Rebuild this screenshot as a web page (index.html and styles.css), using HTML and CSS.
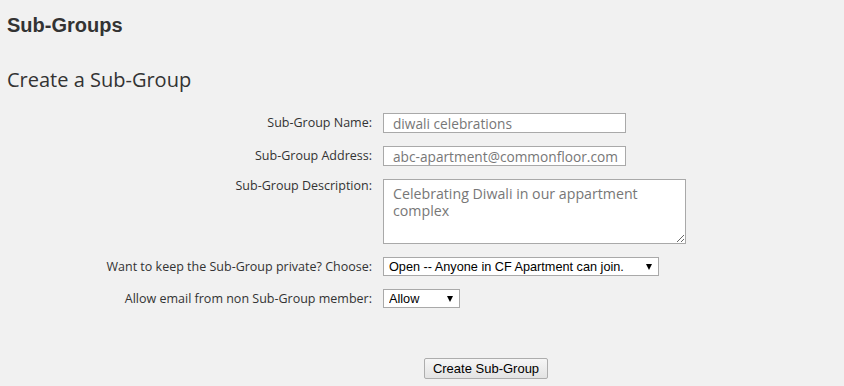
FILE: index.html
```html
<!DOCTYPE html>
<html>
<head>
<meta charset="utf-8">
<title>Sub-Groups</title>
<link rel="stylesheet" href="styles.css">
</head>
<body>
<h2 class="page-title">Sub-Groups</h2>
<h3 class="section-title">Create a Sub-Group</h3>
<form class="form-grid">
  <label class="field-label" for="sg-name">Sub-Group Name:</label>
  <input class="text-input" id="sg-name" type="text" value="diwali celebrations">

  <label class="field-label" for="sg-addr">Sub-Group Address:</label>
  <input class="text-input" id="sg-addr" type="text" value="abc-apartment@commonfloor.com">

  <label class="field-label field-label-top" for="sg-desc">Sub-Group Description:</label>
  <textarea class="text-area" id="sg-desc">Celebrating Diwali in our appartment complex</textarea>

  <label class="field-label" for="sg-priv">Want to keep the Sub-Group private? Choose:</label>
  <span class="select-wrap select-wide">
    <select class="select-box" id="sg-priv">
      <option>Open -- Anyone in CF Apartment can join.</option>
      <option>Closed -- Only approved members can join.</option>
    </select>
  </span>

  <label class="field-label" for="sg-mail">Allow email from non Sub-Group member:</label>
  <span class="select-wrap select-narrow">
    <select class="select-box" id="sg-mail">
      <option>Allow</option>
      <option>Deny</option>
    </select>
  </span>

  <span class="spacer"></span>
  <div class="actions">
    <button class="submit-btn" type="button">Create Sub-Group</button>
  </div>
</form>
</body>
</html>
```

FILE: styles.css
```css
html, body {
  background: #f1f1f1;
}
body {
  margin: 0;
  padding: 0 7px;
  color: #333;
  font-family: "Open Sans", "DejaVu Sans", sans-serif;
}
.page-title {
  margin: 14px 0 0;
  font-family: "Liberation Sans", Arial, sans-serif;
  font-size: 20px;
  font-weight: bold;
  line-height: 23px;
  color: #333;
}
.section-title {
  margin: 29px 0 0;
  font-family: "Open Sans", sans-serif;
  font-size: 20px;
  font-weight: normal;
  line-height: 27px;
  color: #333;
}
.form-grid {
  display: grid;
  grid-template-columns: 365px auto;
  column-gap: 11px;
  row-gap: 13px;
  margin-top: 20px;
  align-items: center;
  justify-items: start;
}
.field-label {
  justify-self: end;
  font-size: 12.5px;
  line-height: 16px;
  color: #333;
}
.field-label-top {
  align-self: start;
  margin-top: -1px;
}
.text-input {
  box-sizing: border-box;
  width: 243px;
  height: 20px;
  margin: 0;
  padding: 0 0 0 9px;
  border: 1px solid #a9a9a9;
  background: #fff;
  font-family: "Open Sans", sans-serif;
  font-size: 13.7px;
  color: #777;
  outline: none;
}
.text-area {
  box-sizing: border-box;
  width: 303px;
  height: 65px;
  margin: 0;
  padding: 5px 9px;
  border: 1px solid #a9a9a9;
  background: #fff;
  font-family: "Open Sans", sans-serif;
  font-size: 14.2px;
  line-height: 17px;
  color: #777;
  resize: both;
  display: block;
}
.select-wrap {
  position: relative;
  display: block;
}
.select-wide { width: 276px; }
.select-narrow { width: 77px; }
.select-box {
  -webkit-appearance: none;
  appearance: none;
  box-sizing: border-box;
  width: 100%;
  height: 19px;
  margin: 0;
  padding: 0 0 0 5px;
  border: 1px solid #a9a9a9;
  border-radius: 0;
  background: #fff;
  font-family: "Liberation Sans", Arial, sans-serif;
  font-size: 12.7px;
  color: #000;
  display: block;
}
.select-wrap::after {
  content: "";
  position: absolute;
  right: 7px;
  top: 7px;
  border-left: 3.5px solid transparent;
  border-right: 3.5px solid transparent;
  border-top: 6px solid #000;
  pointer-events: none;
}
.actions {
  margin-top: 35px;
  margin-left: 41px;
}
.submit-btn {
  box-sizing: border-box;
  width: 124px;
  height: 21px;
  margin: 0;
  padding: 0 6px;
  border: 1px solid #adadad;
  border-radius: 2px;
  background: linear-gradient(#f6f6f6, #e3e3e3);
  font-family: "Liberation Sans", Arial, sans-serif;
  font-size: 13px;
  color: #000;
}
```
